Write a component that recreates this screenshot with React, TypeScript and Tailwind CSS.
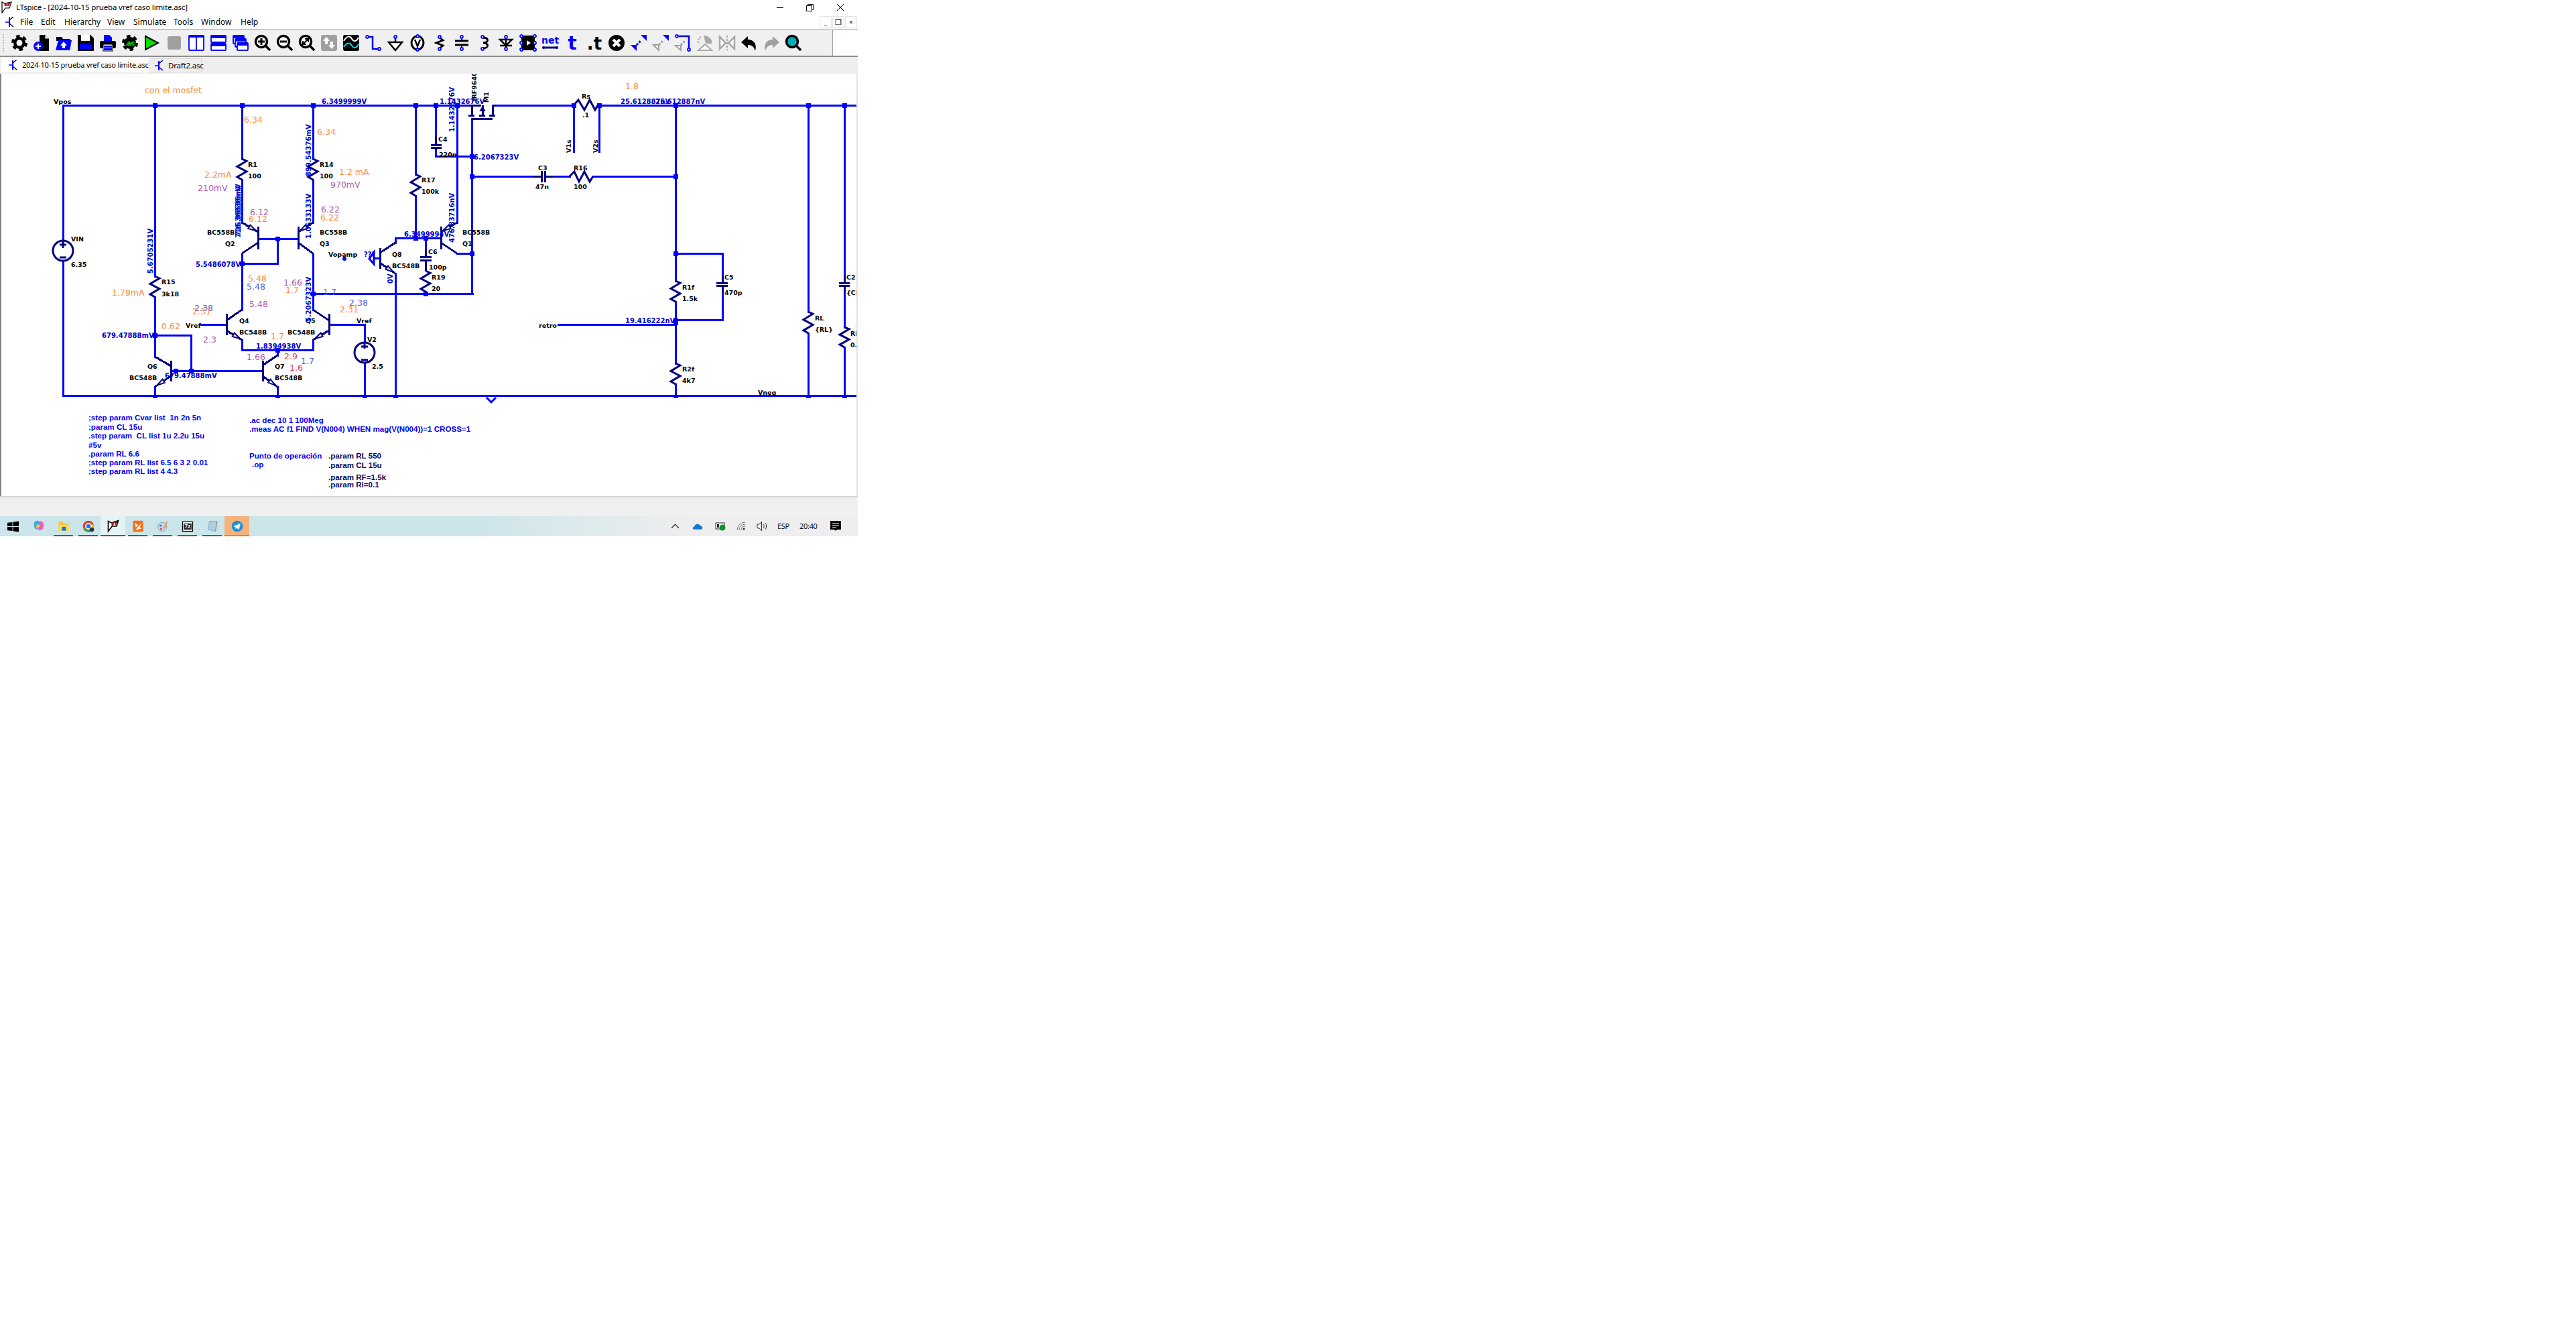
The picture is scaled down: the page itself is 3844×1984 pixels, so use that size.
import type { ReactNode } from 'react'

const NAVY = '#000080'
const BLUE = '#0000ff'

// --- schematic data, in screen pixels ---
const wires = [
  '94,157 700,157', '740,157 856,157', '894,157 1277,157', '94,590 1277,590',
  '94,157 94,358', '94,389 94,590',
  '231,157 231,412', '231,443 231,532', '231,500 285,500 285,553', '231,577 231,590',
  '361,157 361,237', '361,268 361,332', '361,378 361,462', '361,507 361,522 467,522 467,507',
  '255,553 391,553', '385,356 445,356', '414,356 414,393 361,393',
  '414,522 414,530', '414,577 414,590',
  '300,484 338,484', '491,484 544,484 544,510', '544,541 544,590',
  '467,157 467,237', '467,268 467,332', '467,378 467,462', '467,438 705,438',
  '620,157 620,260', '620,292 620,355', '590,362 590,355 658,355', '590,408 590,590',
  '558,385 567,385', '635,355 635,372', '635,435 635,438',
  '650,157 650,203', '650,224 650,233 704,233',
  '682,157 682,332', '682,378 704,378', '704,177 704,438',
  '704,263 797,263', '825,263 850,263', '885,263 1008,263',
  '856,157 856,226', '894,157 894,226',
  '1008,157 1008,419', '1008,450 1008,542', '1008,573 1008,590',
  '1008,378 1078,378 1078,410', '1078,437 1078,477 1008,477', '833,484 1008,484',
  '1206,157 1206,465', '1206,497 1206,590', '1260,157 1260,410', '1260,437 1260,488', '1260,518 1260,590',
]

const navyLines = [
  // Q2, Q3, Q4, Q5, Q6, Q7, Q8, Q1: base bar then collector and emitter legs
  '385,338 385,372', '361,332 385,346', '385,362 361,378',
  '445,338 445,372', '467,332 445,346', '445,362 467,378',
  '338,468 338,500', '361,462 338,478', '338,493 361,507',
  '491,468 491,500', '467,462 491,478', '491,493 467,507',
  '255,538 255,569', '231,532 255,546', '255,561 231,577',
  '392,538 392,569', '414,530 392,545', '392,561 414,577',
  '567,370 567,401', '590,362 567,377', '567,392 590,408',
  '658,338 658,372', '682,332 658,346', '658,362 682,378',
  // M1
  '700,157 718,157', '735,157 740,157', '704,157 704,172', '735,157 735,172', '720,157 720,172',
  '699,172 708,172', '715,172 724,172', '730,172 739,172', '704,177 735,177',
  // capacitors
  '643,216 659,216', '643,220 659,220', '650,203 650,216', '650,220 650,224',
  '627,383 644,383', '627,388 644,388', '635,372 635,383', '635,388 635,404',
  '808,255 808,272', '813,255 813,272', '797,263 808,263', '813,263 825,263',
  '1069,422 1086,422', '1069,426 1086,426', '1078,410 1078,422', '1078,426 1078,437',
  '1252,422 1268,422', '1252,426 1268,426', '1260,410 1260,422', '1260,426 1260,437',
]

// emitter legs, drawn from the far end towards the arrow's tip
const arrows: [number, number, number, number][] = [
  [361, 332, 385, 346], [467, 332, 445, 346], [682, 332, 658, 346],
  [338, 493, 361, 507], [491, 493, 467, 507], [255, 561, 231, 577], [392, 561, 414, 577], [567, 392, 590, 408],
]

const arrowPoints = ([x1, y1, x2, y2]: [number, number, number, number]) => {
  const dx = x2 - x1
  const dy = y2 - y1
  const len = Math.hypot(dx, dy)
  const nx = (-dy / len) * 3
  const ny = (dx / len) * 3
  const bx = x1 + dx * 0.45
  const by = y1 + dy * 0.45
  const tx = x1 + dx * 0.88
  const ty = y1 + dy * 0.88
  return `${tx},${ty} ${bx + nx},${by + ny} ${bx - nx},${by - ny}`
}

const vRes: [number, number, number][] = [
  [361, 237, 268], [467, 237, 268], [231, 412, 443], [620, 260, 292], [635, 404, 435],
  [1008, 419, 450], [1008, 542, 573], [1206, 465, 497], [1260, 488, 518],
]

const nodes: [number, number, number?][] = [
  [231, 157], [361, 157], [467, 157], [620, 157], [650, 157], [682, 157], [856, 157], [894, 157],
  [1008, 157], [1206, 157], [1260, 157], [704, 233], [704, 263], [1008, 263], [1008, 378], [1008, 480, 10],
  [414, 356], [361, 393], [231, 500], [262, 553], [285, 553], [414, 522], [467, 438], [635, 438],
  [620, 355], [635, 355], [704, 378], [231, 592, 4], [414, 592, 4], [544, 592, 4], [590, 592, 4],
  [1008, 592, 4], [1206, 592, 4], [1260, 592, 4],
]

const black: [number, number, string][] = [
  [80, 151, 'Vpos'], [106, 356, 'VIN'], [106, 394, '6.35'], [370, 245, 'R1'], [370, 262, '100'],
  [309, 346, 'BC558B'], [336, 363, 'Q2'], [241, 420, 'R15'], [241, 438, '3k18'], [277, 485, 'Vref'],
  [357, 478, 'Q4'], [357, 495, 'BC548B'], [220, 546, 'Q6'], [193, 563, 'BC548B'], [410, 546, 'Q7'], [410, 563, 'BC548B'],
  [477, 363, 'Q3'], [490, 379, 'Vopamp'], [585, 379, 'Q8'], [585, 396, 'BC548B'], [690, 363, 'Q1'], [639, 375, 'C6'],
  [640, 398, '100p'], [644, 413, 'R19'], [644, 430, '20'], [456, 478, 'Q5'], [429, 495, 'BC548B'], [532, 478, 'Vref'],
  [548, 506, 'V2'], [555, 546, '2.5'], [804, 485, 'retro'], [477, 245, 'R14'], [477, 262, '100'], [477, 346, 'BC558B'],
  [690, 346, 'BC558B'], [654, 207, 'C4'], [655, 230, '220n'], [629, 268, 'R17'], [629, 285, '100k'], [803, 250, 'C3'],
  [799, 278, '47n'], [868, 143, 'Rs'], [869, 171, '.1'], [856, 250, 'R16'], [856, 278, '100'], [1081, 413, 'C5'],
  [1081, 436, '470p'], [1018, 428, 'R1f'], [1018, 445, '1.5k'], [1018, 550, 'R2f'], [1018, 567, '4k7'], [1216, 474, 'RL'],
  [1216, 491, '{RL}'], [1263, 413, 'C2'], [1263, 436, '{CL}'], [1269, 497, 'Ri'], [1269, 514, '0.1'], [1131, 585, 'Vneg'],
]
const blackUp: [number, number, string][] = [
  [707, 151, 'IRF9640'], [725, 153, 'M1'], [888, 228, 'V2s'], [848, 228, 'V1s'],
]
const volts: [number, number, string][] = [
  [480, 151, '6.3499999V'], [656, 151, '1.1432676V'], [707, 234, '6.2067323V'], [603, 349, '6.3499994V'],
  [292, 394, '5.5486078V'], [152, 500, '679.47888mV'], [246, 560, '679.47888mV'], [382, 516, '1.8394938V'],
  [926, 151, '25.612887nV'], [978, 151, '25.612887nV'], [933, 478, '19.416222nV'], [543, 379, '???'],
]
const voltsUp: [number, number, string][] = [
  [674, 197, '1.1432676V'], [460, 263, '899.54376mV'], [460, 356, '1.0533133V'], [674, 362, '476.83716nV'],
  [355, 355, '716.36838mV'], [355, 352, '716.36536mV'], [224, 408, '5.6705231V'], [582, 423, '0V'], [460, 480, '5.2067323V'],
]
const notes: [number, number, string, string][] = [
  [216, 134, 'con el mosfet', '#ff8c3c'], [933, 128, '1.8', '#ff8c3c'], [364, 178, '6.34', '#ff8c3c'],
  [305, 260, '2.2mA', '#ff8c3c'], [295, 280, '210mV', '#ad5ab4'], [373, 316, '6.12', '#ad5ab4'], [371, 326, '6.12', '#ff8c3c'],
  [473, 196, '6.34', '#ff8c3c'], [506, 256, '1.2 mA', '#ff8c3c'], [493, 275, '970mV', '#ad5ab4'], [479, 312, '6.22', '#ad5ab4'],
  [478, 324, '6.22', '#ff8c3c'], [370, 415, '5.48', '#ff8c3c'], [368, 427, '5.48', '#5060d8'], [372, 453, '5.48', '#ad5ab4'],
  [290, 459, '2.38', '#5060d8'], [287, 464, '2.31', '#ff8c3c'], [241, 486, '0.62', '#ff8c3c'], [303, 506, '2.3', '#ad5ab4'],
  [167, 436, '1.79mA', '#ff8c3c'], [404, 501, '1.7', '#ff8c3c'], [368, 532, '1.66', '#ad5ab4'], [423, 421, '1.66', '#ad5ab4'],
  [426, 432, '1.7', '#ff8c3c'], [482, 435, '1.7', '#5060d8'], [521, 451, '2.38', '#5060d8'], [507, 461, '2.31', '#ff8c3c'],
  [424, 531, '2.9', '#f03048'], [449, 538, '1.7', '#5060d8'], [432, 548, '1.6', '#f03048'],
]
const directives: [number, number, string, string][] = [
  [132, 622, ';step param Cvar list  1n 2n 5n', BLUE], [132, 636, ';param CL 15u', BLUE],
  [132, 649, '.step param  CL list 1u 2.2u 15u', BLUE], [132, 663, '#5v', BLUE], [132, 676, '.param RL 6.6', BLUE],
  [132, 689, ';step param RL list 6.5 6 3 2 0.01', BLUE], [132, 702, ';step param RL list 4 4.3', BLUE],
  [372, 626, '.ac dec 10 1 100Meg', BLUE], [372, 639, '.meas AC f1 FIND V(N004) WHEN mag(V(N004))=1 CROSS=1', BLUE],
  [372, 679, 'Punto de operación', BLUE], [376, 692, '.op', BLUE],
  [490, 679, '.param RL 550', '#08085c'], [490, 693, '.param CL 15u', '#08085c'],
  [490, 711, '.param RF=1.5k', '#08085c'], [490, 722, '.param Ri=0.1', '#08085c'],
]

const labelFont = "font-['DejaVu_Sans',sans-serif] font-bold text-[9.5px]"
const voltFont = "font-['DejaVu_Sans',sans-serif] font-bold text-[10px]"

function Schematic() {
  return (
    <svg viewBox="2 110 1276 630" className="block w-[1276px] h-[630px]">
      <g fill="none" strokeLinecap="square" shapeRendering="crispEdges">
        {wires.map((p) => <polyline key={p} points={p} stroke={BLUE} strokeWidth={3} />)}
      </g>
      <g fill="none" stroke={NAVY} strokeWidth={3}>
        {navyLines.map((p) => <polyline key={p} points={p} shapeRendering="crispEdges" />)}
        {vRes.map(([x, a, b]) => {
          const h = b - a
          const pts = [[x, a], [x + 7, a + h * 0.1], [x - 7, a + h * 0.37], [x + 7, a + h * 0.61], [x - 7, a + h * 0.87], [x, b]]
          return <polyline key={`${x}-${a}`} points={pts.join(' ')} />
        })}
        <polyline points="856,157 863,149 872,164 880,149 888,164 892,157" />
        <polyline points="850,263 857,256 864,271 872,256 880,271 885,263" />
        {arrows.map((a) => <polygon key={a.join()} points={arrowPoints(a)} fill="#fff" strokeWidth={2} />)}
        <path d="M717,165 L720,160 L723,165 Z" fill={NAVY} strokeWidth={2} />
        {/* voltage sources */}
        <circle cx={94} cy={374} r={15} strokeWidth={3} />
        <circle cx={544} cy={526} r={15} strokeWidth={3} />
        <path d="M89,365 H99 M94,360 V370 M89,384 H99 M539,517 H549 M544,512 V520 M539,537 H549" strokeWidth={3} />
      </g>
      <path d="M558,376 L551,386 L558,394 Z" fill="none" stroke={BLUE} strokeWidth={3} />
      <path d="M726,593 L733,600 L740,593" fill="none" stroke={BLUE} strokeWidth={3} />
      <circle cx={514} cy={386} r={3} fill={BLUE} />
      {nodes.map(([x, y, s = 7], i) => (
        <rect key={i} x={x - 3.5} y={y - s / 2} width={7} height={s} fill={BLUE} shapeRendering="crispEdges" />
      ))}
      {black.map(([x, y, t]) => (
        <text key={`${x}-${y}`} x={x} y={y} dominantBaseline="central" className={`${labelFont} fill-black`}>{t}</text>
      ))}
      {blackUp.map(([x, y, t]) => (
        <text key={t} x={x} y={y} transform={`rotate(-90 ${x} ${y})`} dominantBaseline="central" className={`${labelFont} fill-black`}>{t}</text>
      ))}
      {volts.map(([x, y, t]) => (
        <text key={`${x}-${y}`} x={x} y={y} dominantBaseline="central" className={`${voltFont} fill-[#0000d8]`}>{t}</text>
      ))}
      {voltsUp.map(([x, y, t]) => (
        <text key={`${x}-${y}`} x={x} y={y} transform={`rotate(-90 ${x} ${y})`} dominantBaseline="central" className={`${voltFont} fill-[#0000d8]`}>{t}</text>
      ))}
      {notes.map(([x, y, t, c]) => (
        <text key={`${x}-${y}`} x={x} y={y} fill={c} dominantBaseline="central" className="font-['DejaVu_Sans',sans-serif] text-[12.5px]">{t}</text>
      ))}
      {directives.map(([x, y, t, c]) => (
        <text key={`${x}-${y}`} x={x} y={y} fill={c} dominantBaseline="central" className="font-['Liberation_Sans',sans-serif] font-bold text-[11.6px] whitespace-pre">{t}</text>
      ))}
    </svg>
  )
}

// --- toolbar icons ---
const Dot = ({ x, y }: { x: number; y: number }) => (
  <circle cx={x} cy={y} r={2} fill="#fff" stroke={BLUE} strokeWidth={1.8} />
)
const Gear = ({ children }: { children?: ReactNode }) => (
  <>
    <circle cx={12} cy={12} r={10} fill="none" stroke="#000" strokeWidth={4} strokeDasharray="5.5 4.97" />
    <circle cx={12} cy={12} r={9} fill="#000" />
    {children ?? <circle cx={12} cy={12} r={4.5} fill="#fff" />}
  </>
)
const Mag = ({ children }: { children?: ReactNode }) => (
  <>
    <path d="M16,16 L23,23" stroke="#000" strokeWidth={3.5} />
    <circle cx={10} cy={10} r={8.5} fill="#fff" stroke="#000" strokeWidth={3.5} />
    {children}
  </>
)
const Pane = ({ x, y, w, h }: { x: number; y: number; w: number; h: number }) => (
  <>
    <rect x={x} y={y} width={w} height={h} rx={1} fill="#fff" stroke={BLUE} strokeWidth={1.8} />
    <rect x={x} y={y} width={w} height={4} fill={BLUE} />
  </>
)

const icons: ReactNode[] = [
  <Gear />,
  <>
    <path d="M9,0 H17 L23,6 V24 H9 Z" fill="#000" /><path d="M17,0 V6 H23" fill="#fff" stroke="#000" />
    <circle cx={7} cy={17} r={7} fill={BLUE} /><path d="M3,17 H11 M7,13 V21" stroke="#fff" strokeWidth={2} />
  </>,
  <>
    <path d="M1,3 H9 L11,6 H22 V9 H1 Z" fill="#000" /><path d="M4,8 H24 L21,23 H0 Z" fill={BLUE} />
    <path d="M12,10 L17,16 H14 V20 H10 V16 H7 Z" fill="#fff" />
  </>,
  <>
    <path d="M0,0 H19 L24,5 V24 H0 Z" fill="#000" /><rect x={5} y={0} width={13} height={9} fill="#fff" />
    <rect x={3} y={14} width={18} height={8} fill={BLUE} />
  </>,
  <>
    <path d="M6,0 H14 L18,4 V9 H6 Z" fill={BLUE} /><rect x={0} y={9} width={24} height={11} rx={2} fill="#000" />
    <rect x={5} y={14} width={14} height={10} fill="#fff" stroke="#000" /><rect x={6} y={16} width={12} height={3} fill={BLUE} /><rect x={6} y={20} width={12} height={3} fill={BLUE} />
  </>,
  <Gear><text x={12} y={15.5} textAnchor="middle" className="font-['Liberation_Sans',sans-serif] font-bold text-[10px] fill-[#00ff00]">.ac</text></Gear>,
  <path d="M2,2 L21,12 L2,22 Z" fill="#00e000" stroke="#000" strokeWidth={2} />,
  <rect x={2} y={2} width={20} height={20} rx={3} fill="#a0a0a0" />,
  <><rect x={1} y={1} width={11} height={22} rx={1} fill="#fff" stroke={BLUE} strokeWidth={1.8} /><rect x={12} y={1} width={11} height={22} rx={1} fill="#fff" stroke={BLUE} strokeWidth={1.8} /><rect x={1} y={1} width={22} height={3} fill={BLUE} /></>,
  <><Pane x={1} y={1} w={22} h={10} /><Pane x={1} y={13} w={22} h={10} /></>,
  <><Pane x={1} y={1} w={16} h={12} /><Pane x={4} y={6} w={16} h={12} /><Pane x={7} y={12} w={16} h={11} /></>,
  <Mag><path d="M5,10 H15 M10,5 V15" stroke="#000" strokeWidth={3} /></Mag>,
  <Mag><path d="M5,10 H15" stroke="#000" strokeWidth={3} /></Mag>,
  <Mag><path d="M6,14 L14,6 M6,9 V14 H11 M9,6 H14 V11" stroke="#000" strokeWidth={2} fill="none" /></Mag>,
  <><rect x={0} y={0} width={24} height={24} rx={3} fill="#a0a0a0" /><path d="M8,3 L13,9 H10 V14 H6 V9 H3 Z M16,21 L21,15 H18 V10 H14 V15 H11 Z" fill="#fff" /></>,
  <>
    <rect x={0} y={0} width={24} height={24} rx={3} fill="#000" />
    <path d="M1,9 C6,1 10,1 13,6 S20,10 23,4" fill="none" stroke="#fff" strokeWidth={2} />
    <path d="M1,18 C6,11 10,11 13,16 S20,20 23,14" fill="none" stroke="#00d8e8" strokeWidth={2} />
  </>,
  <><path d="M3,3 H11 V21 H21" fill="none" stroke={BLUE} strokeWidth={2.5} /><Dot x={3} y={3} /><Dot x={21} y={21} /></>,
  <><path d="M12,5 V11" stroke="#000" strokeWidth={2.5} /><path d="M2,11 H22 L12,23 Z" fill="#fff" stroke="#000" strokeWidth={2.5} /><Dot x={12} y={3} /></>,
  <><ellipse cx={12} cy={12} rx={9} ry={10} fill="#fff" stroke="#000" strokeWidth={3} /><path d="M8,7 L12,17 L16,7" fill="none" stroke="#000" strokeWidth={2.5} /><Dot x={12} y={2} /><Dot x={12} y={22} /></>,
  <><path d="M12,4 L17,8 L7,12 L17,16 L12,20" fill="none" stroke="#000" strokeWidth={2.8} /><Dot x={12} y={3} /><Dot x={12} y={21} /></>,
  <><path d="M2,9 H22 M2,15 H22" stroke="#000" strokeWidth={3} /><path d="M12,4 V9 M12,15 V20" stroke="#000" strokeWidth={2} /><Dot x={12} y={3} /><Dot x={12} y={21} /></>,
  <><path d="M10,4 C20,4 20,12 11,12 C20,12 20,20 10,20" fill="none" stroke="#000" strokeWidth={2.8} /><Dot x={10} y={3} /><Dot x={10} y={21} /></>,
  <><path d="M3,7 H21 L12,16 Z" fill="#fff" stroke="#000" strokeWidth={2.5} /><path d="M3,16 H21 M12,4 V20" stroke="#000" strokeWidth={2.5} /><Dot x={12} y={3} /><Dot x={12} y={21} /></>,
  <>
    <rect x={2} y={1} width={20} height={22} fill="#000" /><path d="M10,8 L16,12 L10,16 Z" fill="#fff" />
    {[[2, 2], [22, 2], [2, 12], [22, 12], [2, 22], [22, 22]].map(([x, y]) => <Dot key={`${x}${y}`} x={x} y={y} />)}
  </>,
  <>
    <text x={12} y={13} textAnchor="middle" className="font-['DejaVu_Sans',sans-serif] font-bold text-[14px] fill-[#0000ff]">net</text>
    <path d="M2,19 H22" stroke={NAVY} strokeWidth={3} /><circle cx={2} cy={19} r={2} fill={NAVY} /><circle cx={22} cy={19} r={2} fill={NAVY} />
  </>,
  <text x={12} y={22} textAnchor="middle" className="font-['DejaVu_Sans',sans-serif] font-bold text-[28px] fill-[#0000ff]">t</text>,
  <text x={12} y={22} textAnchor="middle" className="font-['DejaVu_Sans',sans-serif] font-bold text-[26px] fill-black">.t</text>,
  <><circle cx={12} cy={12} r={12} fill="#000" /><path d="M7,7 L17,17 M17,7 L7,17" stroke="#fff" strokeWidth={4} /></>,
  <><path d="M15,0 H24 V9 Z M0,15 H9 V24 Z" fill={BLUE} /><path d="M9,15 L15,9" stroke={BLUE} strokeWidth={3} strokeDasharray="3 2" /></>,
  <><path d="M15,0 H24 V9 Z" fill={BLUE} /><path d="M1,15 H9 V23 Z" fill="#fff" stroke="#a0a0a0" strokeWidth={2} /><path d="M9,15 L15,9" stroke="#a0a0a0" strokeWidth={3} strokeDasharray="3 2" /></>,
  <><path d="M3,2 H21 V21" fill="none" stroke={BLUE} strokeWidth={2.5} /><Dot x={3} y={2} /><Dot x={21} y={22} /><path d="M1,16 H9 V23 Z" fill="#fff" stroke="#a0a0a0" strokeWidth={2} /><path d="M9,15 L15,9" stroke="#a0a0a0" strokeWidth={3} strokeDasharray="3 2" /></>,
  <><path d="M10,1 C18,1 24,8 22,13 L13,13 Z" fill="#a8a8a8" /><path d="M2,23 L12,14 L22,23 Z" fill="#fff" stroke="#a8a8a8" strokeWidth={2} /><path d="M6,3 A10,10 0 0 0 2,14" fill="none" stroke="#a8a8a8" strokeWidth={2.5} strokeDasharray="2 2" /></>,
  <><path d="M1,3 L10,12 L1,21 Z M23,3 L14,12 L23,21 Z" fill="#fff" stroke="#a8a8a8" strokeWidth={2.5} /><path d="M12,1 V23" stroke="#a8a8a8" strokeWidth={2} strokeDasharray="3 2" /></>,
  <path d="M0,11 L10,2 V7 C19,7 24,14 21,24 C19,17 15,15 10,15 V20 Z" fill="#000" />,
  <path d="M24,11 L14,2 V7 C5,7 0,14 3,24 C5,17 9,15 14,15 V20 Z" fill="#a0a0a0" />,
  <>
    <path d="M16,16 L23,23" stroke="#000" strokeWidth={3.5} />
    <circle cx={10} cy={10} r={8.5} fill="#00b0b8" stroke="#000" strokeWidth={3.5} />
  </>,
]

const TransistorIcon = () => (
  <svg viewBox="0 0 14 16" className="w-[14px] h-[16px] shrink-0">
    <path d="M6,1 V15" stroke={BLUE} strokeWidth={2} />
    <path d="M12,0 L6,5 M6,10 L12,15" stroke={NAVY} strokeWidth={1.5} />
    <path d="M0,8 H6" stroke={BLUE} strokeWidth={1.5} />
  </svg>
)

const menu: [string, string][] = [
  ['File', 'w-[31px]'], ['Edit', 'w-[35px]'], ['Hierarchy', 'w-[64px]'], ['View', 'w-[39px]'],
  ['Simulate', 'w-[60px]'], ['Tools', 'w-[41px]'], ['Window', 'w-[59px]'], ['Help', 'w-[40px]'],
]

// --- taskbar ---
const taskIcons: ReactNode[] = [
  <>
    <path d="M4,5 C8,0 14,2 14,6 L10,16 C6,20 2,14 4,5 Z" fill="#38a8f0" />
    <path d="M14,3 C19,2 22,8 20,14 C18,20 12,20 10,17 Z" fill="#e860c0" />
    <path d="M8,9 L14,9 L12,15 L7,15 Z" fill="#ffc840" />
  </>,
  <><path d="M3,4 H10 L12,7 H21 V20 H3 Z" fill="#f4c040" /><rect x={3} y={9} width={18} height={11} fill="#ffd860" /><rect x={9} y={13} width={7} height={7} fill="#1878c8" /></>,
  <>
    <circle cx={12} cy={12} r={10} fill="#e04030" /><path d="M12,12 L3,17 A10,10 0 0 0 17,21 Z" fill="#30a040" /><path d="M12,12 L21,8 A10,10 0 0 1 17,21 Z" fill="#f0c020" />
    <circle cx={12} cy={12} r={5} fill="#3070e0" stroke="#fff" strokeWidth={2} /><circle cx={18} cy={18} r={4} fill="#333" />
  </>,
  <><path d="M3,3 L9,6 L21,2 L18,12 H10 L3,21 Z" fill="#fff" stroke="#000" strokeWidth={2} /><path d="M9,5 H14 L12,11 H9 Z M14,4 H20 L16,11 Z" fill="#a02020" /></>,
  <><rect x={3} y={2} width={18} height={20} rx={2} fill="#ff6a10" /><path d="M7,19 L18,6 L15,14 L19,16 Z M6,6 L12,10 L8,14 Z" fill="#fff" /></>,
  <><circle cx={11} cy={13} r={8} fill="#c8d8e8" stroke="#7898b8" /><path d="M12,15 L19,3 L21,4 L15,17 Z" fill="#e8a050" /><circle cx={8} cy={11} r={2} fill="#4878d0" /><circle cx={9} cy={17} r={2} fill="#d05050" /></>,
  <><rect x={3} y={4} width={18} height={17} fill="#fff" stroke="#000" strokeWidth={1.5} /><rect x={5} y={7} width={14} height={11} fill="#222" /><text x={12} y={16} textAnchor="middle" className="font-['Liberation_Sans',sans-serif] font-bold text-[10px] fill-white">7z</text></>,
  <><path d="M7,3 L20,3 L17,21 L4,18 Z" fill="#a8d0e8" stroke="#88a0b0" /><path d="M17,21 L20,3 L21,5 L18,21 Z" fill="#a09070" /></>,
  <><circle cx={12} cy={12} r={10} fill="#2090d8" /><path d="M5,12 L18,7 L15,18 L11,15 L9,17 L9,14 Z" fill="#fff" /></>,
]

export default function App() {
  return (
    <div className="w-[1280px] h-[800px] flex flex-col bg-white text-black font-['Noto_Sans',sans-serif]">
      {/* title bar */}
      <div className="h-[22px] flex items-center relative">
        <svg viewBox="0 0 16 18" className="w-[16px] h-[18px] ml-[2px]">
          <path d="M1,1 L5,3 L15,1 L12,10 H6 L1,17 Z" fill="#fff" stroke="#000" strokeWidth={1.2} />
          <path d="M4,2 H8 V7 H5 Z M9,2 H14 L11,7 H9 Z" fill="#a02020" />
        </svg>
        <span className="ml-[6px] text-[11.5px] tracking-[-0.15px]">LTspice - [2024-10-15 prueba vref caso limite.asc]</span>
        <div className="ml-auto flex items-center text-black">
          <div className="w-[45px] flex justify-center"><div className="w-[10px] h-px bg-black" /></div>
          <div className="w-[45px] flex justify-center">
            <svg viewBox="0 0 11 11" className="w-[11px] h-[11px]"><path d="M2.5,2.5 V0.5 H10.5 V8.5 H8.5 M0.5,2.5 H8.5 V10.5 H0.5 Z" fill="none" stroke="#000" /></svg>
          </div>
          <div className="w-[49px] flex justify-center pr-[4px]">
            <svg viewBox="0 0 12 12" className="w-[12px] h-[12px]"><path d="M1,1 L11,11 M11,1 L1,11" stroke="#000" /></svg>
          </div>
        </div>
      </div>
      {/* menu */}
      <div className="h-[21px] flex items-center relative">
        <div className="w-[30px] pl-[8px] flex items-center"><TransistorIcon /></div>
        {menu.map(([m, w]) => <span key={m} className={`${w} text-[12px]`}>{m}</span>)}
        <div className="ml-auto flex gap-[1px] mr-[1px] text-[#555]">
          {['_', '❐', '×'].map((c) => (
            <div key={c} className="w-[18px] h-[18px] border border-[#e4e4e4] flex items-center justify-center text-[11px] leading-none font-bold">{c}</div>
          ))}
        </div>
      </div>
      {/* toolbar */}
      <div className="h-[42px] border-t-2 border-t-[#c8c8c8] border-b-2 border-b-[#8c8c8c] flex">
        <div className="w-[1243px] h-full bg-[#f0f0f0] border-r border-r-[#a0a0a0] flex items-center pl-[12px] relative">
          <div className="absolute left-[4px] top-[6px] bottom-[6px] w-[2px] border-l-2 border-dotted border-[#b8b8b8]" />
          {icons.map((ic, i) => (
            <div key={i} className="w-[33px] flex justify-center">
              <svg viewBox="0 0 24 24" className="w-[24px] h-[24px] overflow-visible">{ic}</svg>
            </div>
          ))}
        </div>
      </div>
      {/* tabs */}
      <div className="h-[25px] bg-[#eeeeee] flex items-end pl-[2px] pb-[2px]">
        <div className="w-[221px] h-[22px] bg-white flex items-center pl-[11px] gap-[6px] text-[11px] tracking-[-0.25px] whitespace-nowrap">
          <TransistorIcon />
          <span>2024-10-15 prueba vref caso limite.asc</span>
        </div>
        <div className="w-[78px] h-[21px] border border-[#d8d8d8] flex items-center pl-[7px] gap-[6px] text-[11.5px] tracking-[-0.2px] whitespace-nowrap">
          <TransistorIcon />
          <span>Draft2.asc</span>
        </div>
      </div>
      {/* schematic */}
      <div className="h-[630px] flex border-l-2 border-l-[#808080] border-r-2 border-r-[#e4e4e4] overflow-hidden">
        <Schematic />
      </div>
      {/* status bar */}
      <div className="h-[30px] bg-[#f0f0f0] border-t-2 border-t-[#d4d4d4]" />
      {/* taskbar */}
      <div className="h-[30px] flex bg-gradient-to-r from-[#cbe5ea] from-55% to-[#eeeeee] to-80%">
        <div className="w-[39px] flex items-center justify-center">
          <svg viewBox="0 0 18 18" className="w-[17px] h-[17px]">
            <path d="M0,3 L8,2 V8.5 H0 Z M9,1.8 L18,0.5 V8.5 H9 Z M0,9.5 H8 V16 L0,15 Z M9,9.5 H18 V17.5 L9,16.2 Z" fill="#000" />
          </svg>
        </div>
        {taskIcons.map((ic, i) => {
          const active = i === 3
          const tg = i === 8
          return (
            <div key={i} className={`w-[37px] h-full relative flex items-center justify-center ${active ? 'bg-[#e6f3f4]' : tg ? 'bg-[#f5b27a]' : ''}`}>
              <svg viewBox="0 0 24 24" className="w-[20px] h-[20px]">{ic}</svg>
              {i > 0 && (
                <div className={`absolute bottom-0 h-[2px] ${active ? 'inset-x-0 bg-[#c8215d]' : tg ? 'inset-x-0 bg-[#ff7a10]' : 'inset-x-[4px] bg-[#c8215d]'}`} />
              )}
            </div>
          )
        })}
        <div className="ml-auto flex items-center pr-[25px] text-[#111] text-[11px]">
          <svg viewBox="0 0 14 8" className="w-[13px] h-[8px] mr-[19px]"><path d="M1,7 L7,1 L13,7" fill="none" stroke="#000" strokeWidth={1.2} /></svg>
          <svg viewBox="0 0 18 11" className="w-[17px] h-[11px] mr-[17px]"><path d="M3,10 C0,10 0,6 3,6 C4,1 11,0 12,4 C16,3 18,10 14,10 Z" fill="#1478d2" /></svg>
          <svg viewBox="0 0 16 14" className="w-[16px] h-[14px] mr-[16px]">
            <rect x={1} y={2} width={13} height={9} fill="#fff" stroke="#222" /><rect x={3} y={4} width={3} height={5} fill="#222" />
            <circle cx={11} cy={9} r={4.5} fill="#189030" />
          </svg>
          <svg viewBox="0 0 14 14" className="w-[14px] h-[14px] mr-[16px]"><path d="M1,13 A12,12 0 0 1 13,1 M4,13 A9,9 0 0 1 13,4 M7,13 A6,6 0 0 1 13,7" fill="none" stroke="#777" /><circle cx={11} cy={11} r={1.5} fill="#222" /></svg>
          <svg viewBox="0 0 18 16" className="w-[17px] h-[16px] mr-[14px]"><path d="M1,5 H4 L8,1 V15 L4,11 H1 Z M11,5 C12,7 12,9 11,11 M14,3 C16,6 16,10 14,13" fill="none" stroke="#222" /></svg>
          <span className="w-[33px] tracking-[-0.3px]">ESP</span>
          <span className="w-[46px] tracking-[-0.3px]">20:40</span>
          <svg viewBox="0 0 16 16" className="w-[16px] h-[16px]"><path d="M0,0 H16 V13 H10 L8,15 L6,13 H0 Z" fill="#000" /><path d="M3,4 H13 M3,7 H13 M3,10 H9" stroke="#fff" /></svg>
        </div>
      </div>
    </div>
  )
}
